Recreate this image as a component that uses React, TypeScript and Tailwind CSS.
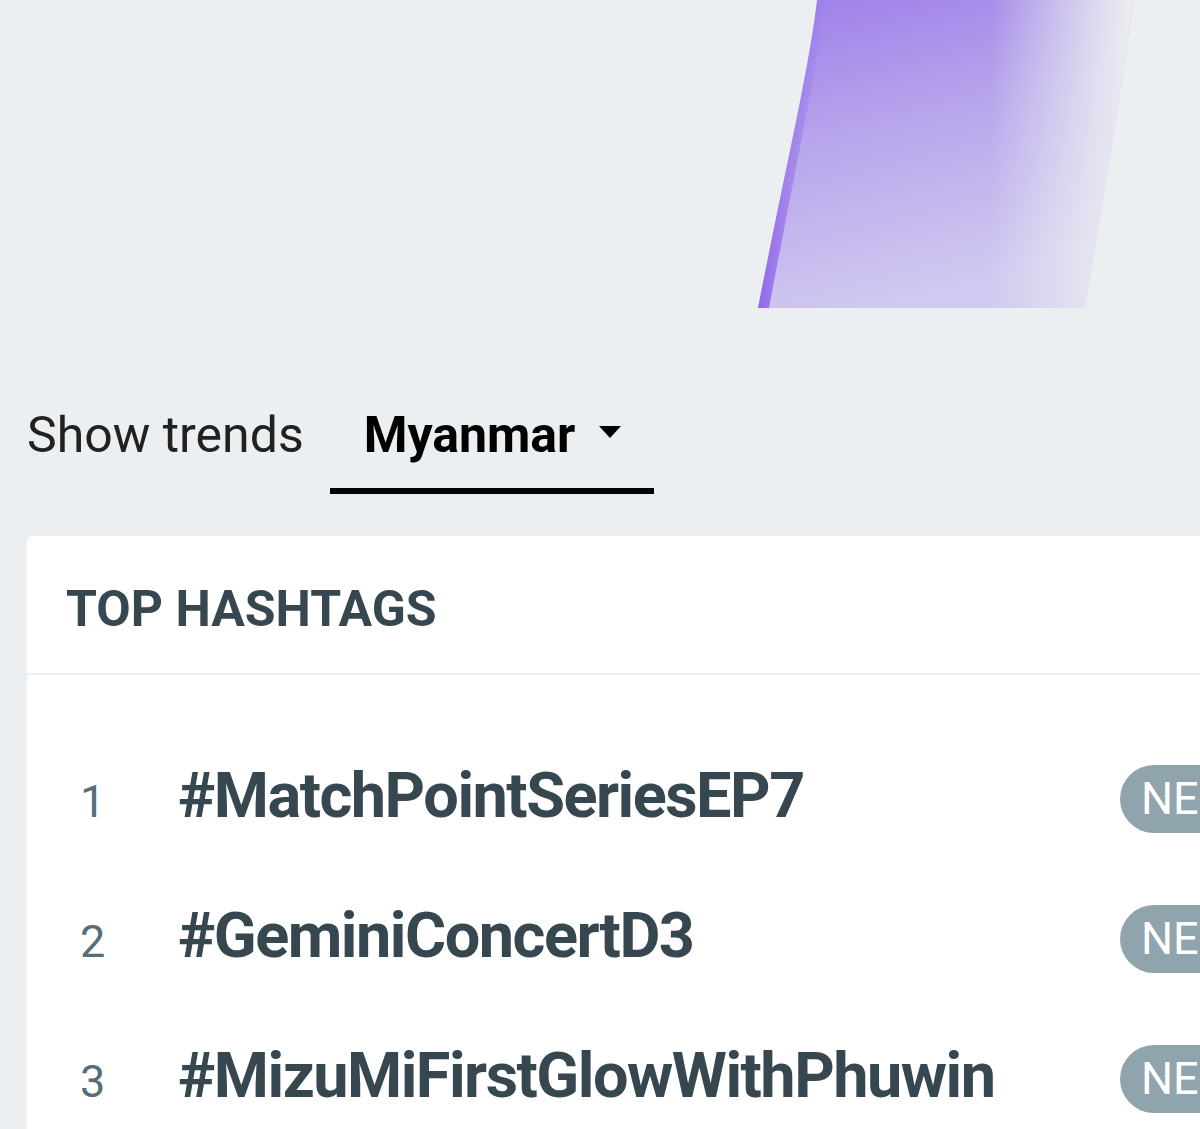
const TAGS = [
  { rank: 1, tag: '#MatchPointSeriesEP7' },
  { rank: 2, tag: '#GeminiConcertD3' },
  { rank: 3, tag: '#MizuMiFirstGlowWithPhuwin' },
];

function PurpleWave() {
  return (
    <svg width="400" height="308" viewBox="0 0 400 308">
      <defs>
        <linearGradient id="fill" x1="0" y1="0" x2="0.3" y2="1">
          <stop offset="0" stopColor="#9d7eea" />
          <stop offset="0.45" stopColor="#b7a4ec" />
          <stop offset="1" stopColor="#d1c9f0" />
        </linearGradient>
        <linearGradient id="fade" x1="0" y1="0" x2="1" y2="0">
          <stop offset="0.62" stopColor="#eceff1" stopOpacity="0" />
          <stop offset="0.9" stopColor="#eceff1" stopOpacity="0.75" />
          <stop offset="1" stopColor="#eceff1" stopOpacity="1" />
        </linearGradient>
        <linearGradient id="edge" x1="0" y1="0" x2="1" y2="0">
          <stop offset="0" stopColor="#8656ea" stopOpacity="0.85" />
          <stop offset="1" stopColor="#8656ea" stopOpacity="0" />
        </linearGradient>
      </defs>
      <path d="M62 0 C54 70 30 170 3 308 L330 308 C348 200 365 100 378 0 Z" fill="url(#fill)" />
      <path d="M62 0 C54 70 30 170 3 308 L330 308 C348 200 365 100 378 0 Z" fill="url(#fade)" />
      <path d="M62 0 C54 70 30 170 3 308 L14 308 C40 170 62 70 70 0 Z" fill="url(#edge)" />
    </svg>
  );
}

export default function App() {
  return (
    <div className="w-[1200px] h-[1129px] overflow-hidden bg-[#eceff1] font-['Roboto',sans-serif]">
      <div className="h-[308px] pl-[755px]">
        <PurpleWave />
      </div>

      <div className="mt-[97px] flex items-baseline pl-[27px]">
        <span className="text-[50px] leading-[60px] text-[#212121]">Show trends</span>
        <button className="ml-[26px] flex items-baseline border-b-[6px] border-black pl-[34px] pr-[33px] pb-[23px]">
          <span className="text-[50px] leading-[60px] font-bold text-black">Myanmar</span>
          <svg className="ml-[24px] -translate-y-[14px]" width="22" height="12" viewBox="0 0 22 12">
            <path d="M0 0 L22 0 L11 12 Z" fill="#000" />
          </svg>
        </button>
      </div>

      <div className="mt-[42px] ml-[27px] w-[1300px] rounded-tl-md bg-white">
        <div className="border-b-2 border-[#eceff1] pl-[39px] pt-[43px] pb-[34px]">
          <h2 className="text-[50px] leading-[60px] font-bold text-[#37474f]">TOP HASHTAGS</h2>
        </div>
        <div className="pt-[54px]">
          {TAGS.map((t) => (
            <div
              key={t.rank}
              className="grid h-[140px] grid-cols-[98px_942px_auto] items-baseline content-center pl-[53px]"
            >
              <span className="text-[45px] leading-[80px] text-[#546e7a]">{t.rank}</span>
              <span className="text-[63px] leading-[80px] font-bold tracking-[-1.5px] text-[#37474f] whitespace-nowrap">
                {t.tag}
              </span>
              <span className="self-center flex h-[68px] items-center rounded-full bg-[#90a4ae] pl-[21px] pr-[26px] text-[45px] text-white">
                NEW
              </span>
            </div>
          ))}
        </div>
      </div>
    </div>
  );
}
